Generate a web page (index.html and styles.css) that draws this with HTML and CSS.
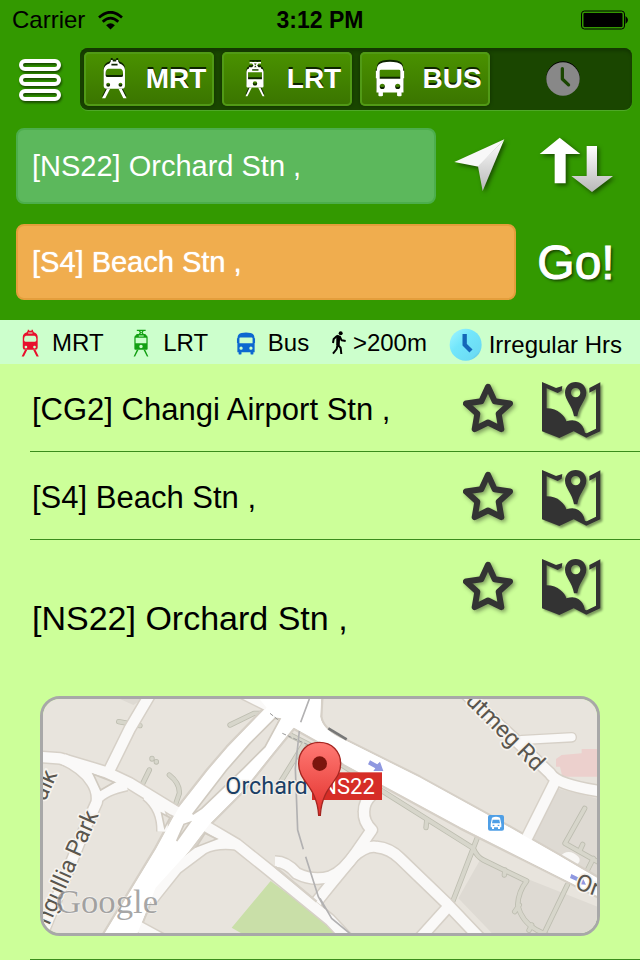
FILE: index.html
```html
<!DOCTYPE html>
<html lang="en">
<head>
<meta charset="utf-8">
<meta name="viewport" content="width=device-width, initial-scale=1">
<title>Stations</title>
<link rel="stylesheet" href="styles.css">
</head>
<body>
<svg class="sprite" aria-hidden="true">
  <symbol id="train" viewBox="0 0 80 124">
    <path fill-rule="evenodd" d="M26 14L30 8V3H36V8H47V3H53V8L57 14Q73 19 74 34V82Q74 92 64 92H18Q8 92 8 82V34Q9 19 26 14ZM32 15V20H51V15ZM22 30Q14 32 14 44V50Q14 56 20 56H62Q68 56 68 50V44Q68 32 60 30ZM22 74A6 6 0 1 0 22 86A6 6 0 1 0 22 74ZM60 74A6 6 0 1 0 60 86A6 6 0 1 0 60 74Z"/>
    <path d="M18 92H28L13 122H3ZM54 92H64L79 122H69Z"/>
  </symbol>
  <symbol id="tram" viewBox="0 0 66 114">
    <path fill-rule="evenodd" d="M16 3H52V8H44L40 14L44 20H52V24Q60 26 60 34V80Q60 84 56 84H10Q6 84 6 80V34Q6 26 14 24V20H24L28 14L24 8H16ZM30 8L34 14L38 8ZM30 20H38L34 15ZM24 26V31H44V26ZM11 36V58H55V36ZM33 64A7 7 0 1 0 33 78A7 7 0 1 0 33 64Z"/>
    <path d="M16 84H23L9 112H3ZM43 84H50L63 112H57Z"/>
  </symbol>
  <symbol id="bus" viewBox="0 0 92 112">
    <path fill-rule="evenodd" d="M24 5Q46 0 68 5Q86 9 87 26V30H90V54H88V98H82V108Q76 112 68 108V98H24V108Q16 112 10 108V98H4V54H2V30H5V26Q6 9 24 5ZM18 27Q14 27 14 31V55H78V31Q78 27 74 27ZM22 71A8 8 0 1 0 22 87A8 8 0 1 0 22 71ZM70 71A8 8 0 1 0 70 87A8 8 0 1 0 70 71Z"/>
  </symbol>
  <symbol id="star" viewBox="60 64 180 170">
    <path fill="none" stroke="#333" stroke-width="18" stroke-linejoin="round" d="M144 81L164 124L210 131L176 162L184 208L144 188L104 208L112 162L78 131L124 124Z"/>
  </symbol>
  <symbol id="mapicon" viewBox="297 56 192 180">
    <path fill="#333" d="M303 62L345 80L364 74L362 88L350 95L317 81V141Q343 141 358 155Q374 168 376 180Q398 172 412 182Q428 192 432 214L437 216L465 202V84L445 94V80L478 63V210L436 229L398 210L355 230L303 210Z"/>
    <path fill="#333" fill-rule="evenodd" d="M404 62C385 62 372 76 372 94C372 116 394 132 399 165H409C414 132 436 116 436 94C436 76 423 62 404 62ZM404 80A14 14 0 1 1 404 108A14 14 0 1 1 404 80Z"/>
  </symbol>
</svg>

<header class="top">
  <div class="status">
    <div class="carrier">Carrier
      <svg class="wifi" viewBox="0 0 74 56" aria-hidden="true">
        <g fill="none" stroke="#000" stroke-width="8"><path d="M3 19Q37 -12 71 19"/><path d="M14 32Q37 10 60 32"/></g>
        <path d="M24 42Q37 31 50 42L37 55Z"/>
      </svg>
    </div>
    <div class="time">3:12 PM</div>
    <svg class="battery" viewBox="0 0 47 20" aria-hidden="true"><rect x="1" y="1" width="43" height="18" rx="3" fill="none" stroke="#000"/><rect x="3" y="3" width="39" height="14" rx="1"/><path d="M45 6Q50 10 45 14Z"/></svg>
  </div>

  <div class="modes">
    <button class="icon-btn menu" aria-label="Menu">
      <svg viewBox="0 0 44 44"><g fill="none" stroke="#fff" stroke-width="4"><rect x="3" y="4" width="38" height="8" rx="4"/><rect x="3" y="19" width="38" height="8" rx="4"/><rect x="3" y="34" width="38" height="8" rx="4"/></g></svg>
    </button>
    <nav class="tabs">
      <button class="tab on"><svg><use href="#train"/></svg>MRT</button>
      <button class="tab on"><svg class="small"><use href="#tram"/></svg>LRT</button>
      <button class="tab on"><svg class="small"><use href="#bus"/></svg>BUS</button>
      <button class="tab off" aria-label="Hours"><svg viewBox="0 0 104 108"><circle cx="52" cy="54" r="51" fill="#888"/><path d="M50 22V54L69 72" fill="none" stroke="#1a4600" stroke-width="10" stroke-linecap="round" stroke-linejoin="round"/></svg></button>
    </nav>
  </div>

  <form class="route">
    <div class="line">
      <input class="field from" type="text" aria-label="From" value="[NS22] Orchard Stn ,">
      <button type="button" class="icon-btn locate" aria-label="Current location">
        <svg viewBox="98 50 168 180"><defs><linearGradient id="lg" x1="0" y1="0" x2="0" y2="1"><stop offset="0" stop-color="#fff"/><stop offset="1" stop-color="#b8b8b8"/></linearGradient></defs><path fill="#f8f8f8" d="M105 128L255 60L178 142Z"/><path fill="url(#lg)" d="M255 60L190 215L176 141Z"/></svg>
      </button>
      <button type="button" class="icon-btn swap" aria-label="Swap">
        <svg viewBox="352 48 234 180"><path fill="#fff" d="M360 102L420 53L482 102H438V190H405V102Z"/><path fill="url(#lg)" d="M501 78H532V168H580L517 216L455 168H501Z"/></svg>
      </button>
    </div>
    <div class="line second">
      <input class="field to" type="text" aria-label="To" value="[S4] Beach Stn ,">
      <button type="button" class="go">Go!</button>
    </div>
  </form>
</header>

<ul class="legend">
  <li class="red"><svg><use href="#train"/></svg>MRT</li>
  <li class="green"><svg><use href="#tram"/></svg>LRT</li>
  <li class="blue"><svg class="low"><use href="#bus"/></svg>Bus</li>
  <li><svg class="walk" viewBox="26 42 46 72"><circle cx="54" cy="49" r="6"/><path d="M43 56L52 60L57 70L69 72M43 57L33 66L31 78M47 58L45 82L54 93L56 111M45 82L42 96L31 110" fill="none" stroke="#000" stroke-width="6" stroke-linejoin="round"/><path d="M41 55L53 58L51 84H41Z"/></svg>&gt;200m</li>
  <li class="hours"><svg class="clock" viewBox="0 0 102 102"><defs><linearGradient id="cg" x1="0" y1="0" x2="1" y2="1"><stop offset="0" stop-color="#a4f6ff"/><stop offset="0.4" stop-color="#72e6fb"/><stop offset="0.8" stop-color="#6cdcf4"/><stop offset="1" stop-color="#4aa8cc"/></linearGradient></defs><circle cx="50" cy="50" r="48" fill="url(#cg)"/><path d="M47 18V50L66 69" fill="none" stroke="#1467b8" stroke-width="13"/></svg>Irregular Hrs</li>
</ul>

<main class="stations">
  <article class="station">
    <h2>[CG2] Changi Airport Stn ,</h2>
    <div class="actions"><button class="icon-btn" aria-label="Favourite"><svg class="star"><use href="#star"/></svg></button><button class="icon-btn" aria-label="Map"><svg class="map-ic"><use href="#mapicon"/></svg></button></div>
  </article>
  <article class="station">
    <h2>[S4] Beach Stn ,</h2>
    <div class="actions"><button class="icon-btn" aria-label="Favourite"><svg class="star"><use href="#star"/></svg></button><button class="icon-btn" aria-label="Map"><svg class="map-ic"><use href="#mapicon"/></svg></button></div>
  </article>
  <article class="station open">
    <div class="head">
      <h2>[NS22] Orchard Stn ,</h2>
      <div class="actions"><button class="icon-btn" aria-label="Favourite"><svg class="star"><use href="#star"/></svg></button><button class="icon-btn" aria-label="Map"><svg class="map-ic"><use href="#mapicon"/></svg></button></div>
    </div>
    <div class="map">
      <svg viewBox="39 42 1662 702" preserveAspectRatio="xMidYMid slice">
        <defs>
          <linearGradient id="pin" x1="0" y1="0" x2="0" y2="1"><stop offset="0" stop-color="#ff7a74"/><stop offset="1" stop-color="#e2302c"/></linearGradient>
          <g id="minor">
            <path d="M20 215L90 220L230 262L300 295L430 375L530 425L620 478L720 558L900 705L980 790"/>
            <path d="M365 20L300 130L235 262"/>
            <path d="M100 222Q160 250 185 290Q205 320 200 352L165 430L60 690L20 790M198 345Q220 315 290 300"/>
            <path d="M350 330Q400 370 398 440"/>
            <path d="M620 478Q560 470 520 490L440 550L360 650"/>
            <path d="M320 722L400 765"/>
            <path d="M640 25L740 75"/>
            <path d="M735 530Q770 530 800 565Q850 590 900 575Q940 560 980 500L1025 435Q1000 410 1002 380Q1002 350 1025 330"/>
            <path d="M860 650L900 600L970 515Q1010 480 1040 486Q1080 490 1110 520L1250 655L1350 760"/>
            <path d="M1255 665L1165 765"/>
            <path d="M1300 20L1440 150L1560 265Q1580 300 1720 320"/>
            <path d="M1575 290L1485 470"/>
          </g>
          <g id="paths">
            <path d="M920 230L1060 320L1330 490Q1340 515 1360 525L1490 588Q1465 620 1463 660Q1475 710 1520 735L1580 765M1345 450L1268 650M1612 600L1535 760M1190 408L1188 428M1425 555L1423 570M1468 660L1454 680M1505 720L1497 736M1664 370L1605 475L1720 540M1658 478L1648 500M1690 520L1670 560"/>
            <path d="M820 180L752 290M780 150L880 200M600 120L672 85L700 85M266 110L330 122M358 255L336 300M418 270Q450 295 448 325L436 360M366 220L366 222M379 230L379 231"/>
          </g>
        </defs>
        <rect x="30" y="33" width="1680" height="720" fill="#e8e4dd"/>
        <path fill="#dedad3" d="M1350 525L1740 680V780H1420L1285 640ZM1580 310L1720 345V590L1500 470ZM270 42H340L310 60Z"/>
        <path fill="#c9dfa8" d="M722 588L605 728L660 760H1000L900 720Z"/>
        <path fill="#ecd0cd" d="M1578 222L1595 210L1655 205V192H1720V275H1597L1590 245H1578Z"/>
        <use href="#paths" fill="none" stroke="#bdbdb0" stroke-width="16" stroke-linecap="round" stroke-linejoin="round"/>
        <use href="#paths" fill="none" stroke="#d7d6cb" stroke-width="11" stroke-linecap="round" stroke-linejoin="round"/>
        <use href="#minor" fill="none" stroke="#d6d0c7" stroke-width="40" stroke-linejoin="round"/>
        <path d="M1475 165L1625 157" stroke="#d6d0c7" stroke-width="32" stroke-linecap="round"/>
        <path d="M1600 525Q1615 505 1635 525" fill="none" stroke="#f8f7f5" stroke-width="28" stroke-linecap="round"/>
        <path fill="#fff" stroke="#d6d0c7" stroke-width="7" stroke-linejoin="round" d="M655 20L706 65L590 185L530 255L440 370L375 490L205 770H315L380 610L480 500L545 415L640 320L720 220L792 132L860 170L940 240L1060 305L1290 430L1480 525L1720 645V585L1590 510L1370 385L1170 275L950 165Q880 135 874 95L878 20Z"/>
        <use href="#minor" fill="none" stroke="#faf9f8" stroke-width="31" stroke-linejoin="round"/>
        <path fill="#fff" d="M710 68L594 187L534 257L444 372L379 492L210 770H312L377 608L477 498L542 413L637 318L717 218L790 126L862 166L942 236L1062 301L1292 426L1480 521L1700 632V580L1588 512L1368 387L1168 277L948 167Q876 136 870 95L874 20H670Z"/>
        <path d="M1475 165L1625 157" stroke="#faf9f8" stroke-width="24" stroke-linecap="round"/>
        <path fill="#e8e4dd" stroke="#d0cac0" stroke-width="5" d="M735 100L750 102L705 185L640 250L515 370L488 388L590 255L660 175ZM480 412L440 468L462 418ZM190 268L252 292L212 315ZM395 385L420 398L404 428ZM525 445L560 462L500 485Z"/>
        <path d="M720 85L745 105M757 145L880 200" stroke="#999" stroke-width="3" stroke-dasharray="12 6"/>
        <path fill="none" stroke="#b2b1b2" stroke-width="5" d="M838 42L812 112M808 138L796 250L803 435L820 493M827 515L865 635L885 670M870 640L905 700L965 750"/>
        <path d="M735 545L860 650" stroke="#d6d0c7" stroke-width="7"/>
        <path d="M895 130L950 163" stroke="#777" stroke-width="8"/>
        <g fill="#8f98e0"><path d="M1020 226L1042 238L1050 230L1060 258L1030 258L1036 250L1014 238Z"/><path d="M1624 567L1650 580L1656 574L1668 599L1640 597L1645 590L1620 579Z"/></g>
        <g class="road-name">
          <text transform="translate(58 722) rotate(-66)">ngullia Park</text>
          <text transform="translate(46 350) rotate(-66)">alk</text>
          <text transform="translate(1304 50) rotate(45)">utmeg Rd</text>
          <text transform="translate(1632 610) rotate(20)">Or</text>
        </g>
        <text class="google" x="78" y="683">Google</text>
        <text class="place" x="586" y="326">Orchard</text>
        <rect x="846" y="262" width="210" height="83" fill="#d62d27"/>
        <text class="code" x="874" y="326">NS22</text>
        <g transform="translate(1374 390)"><rect width="48" height="47" rx="6" fill="#4f9fe6"/><path fill="#fff" fill-rule="evenodd" d="M12 8Q24 3 36 8L40 28V37H36V42H30V37H18V42H12V37H8V28ZM14 14L12 25H36L34 14ZM14 29V33H19V29ZM29 29V33H34V29Z"/></g>
        <path fill="url(#pin)" stroke="#a52621" stroke-width="4" d="M868 172C830 172 806 200 806 236C806 292 860 300 866 391H871C876 300 932 292 932 236C932 200 906 172 868 172Z"/>
        <circle cx="869" cy="236" r="22" fill="#7c150d"/>
      </svg>
    </div>
  </article>
</main>
</body>
</html>
```
FILE: styles.css
```css
* { box-sizing: border-box; }
body {
  margin: 0;
  background: #ccff99;
  color: #000;
  font-family: "Liberation Sans", Arial, sans-serif;
}
button { font-family: inherit; border: 0; padding: 0; background: none; cursor: pointer; }
svg { display: block; flex: none; }
.sprite { position: absolute; width: 0; height: 0; }

.top { background: #339900; padding-bottom: 20px; }

.status {
  display: grid;
  grid-template-columns: 1fr auto 1fr;
  align-items: center;
  height: 40px;
  padding: 0 12px;
  font-size: 24px;
}
.carrier { display: flex; align-items: center; gap: 13px; }
.wifi { width: 25px; height: 19px; }
.time { font-weight: bold; font-size: 23px; }
.battery { justify-self: end; width: 48px; height: 20px; }

.modes { display: flex; align-items: center; gap: 16px; padding: 8px 8px 18px 16px; }
.icon-btn { display: flex; align-items: center; justify-content: center; }
.menu { width: 48px; }
.menu svg { width: 44px; height: 44px; filter: drop-shadow(1px 2px 1px rgba(0, 0, 0, .5)); }

.tabs {
  flex: 1;
  display: grid;
  grid-template-columns: repeat(4, 1fr);
  gap: 8px;
  height: 62px;
  padding: 4px;
  border-radius: 8px;
  background: #1a4600;
  box-shadow: inset 0 3px 3px #143800, 0 1px 0 #4fa828;
}
.tab {
  display: flex;
  align-items: center;
  justify-content: center;
  gap: 16px;
  border-radius: 5px;
  color: #fff;
  fill: #fff;
  font-size: 28px;
  font-weight: bold;
}
.tab svg { width: 32px; height: 40px; filter: drop-shadow(0 -2px 0 #0d2400); }
.tab .small { height: 36px; }
.tab.on {
  padding-left: 6px;
  background: linear-gradient(#4a9200, #3a7400);
  box-shadow: inset 0 0 0 2px #519a16, 0 0 3px 1px #143800;
  text-shadow: 0 -2px 0 #0d2400;
}
.tab.off svg { width: 34px; height: 36px; filter: drop-shadow(0 -1px 0 #000); }

.route { display: flex; flex-direction: column; gap: 20px; padding: 0 12px 0 16px; }
.line { display: flex; gap: 12px; }
.line.second { gap: 8px; }
.field {
  flex: 1;
  min-width: 0;
  height: 76px;
  padding: 0 14px;
  border: 2px solid;
  border-radius: 8px;
  color: #fff;
  font-family: inherit;
  font-size: 29px;
}
.from { background: #5cb85c; border-color: #4cae4c; }
.to { background: #f0ad4e; border-color: #e49e3c; text-shadow: 0 0 1px #fff; }
.locate { width: 64px; }
.swap, .go { width: 104px; }
.locate svg { width: 56px; height: 60px; }
.swap svg { width: 78px; height: 60px; }
.locate svg, .swap svg { filter: drop-shadow(2px 2px 2px rgba(0, 0, 0, .5)); }
.go {
  color: #fff;
  font-size: 48px;
  -webkit-text-stroke: 1px #fff;
  text-shadow: 2px 2px 3px rgba(0, 0, 0, .6);
}

.legend {
  display: flex;
  align-items: center;
  justify-content: space-between;
  height: 44px;
  margin: 0;
  padding: 2px 18px 0 14px;
  background: #ccffcc;
  list-style: none;
  font-size: 24px;
}
.legend li { display: flex; align-items: center; gap: 6px; white-space: nowrap; }
.legend svg { width: 32px; height: 28px; }
.legend .low { height: 23px; }
.legend .walk { width: 16px; height: 24px; }
.legend .clock { width: 34px; height: 34px; }
.legend .hours { padding-top: 4px; }
.red { fill: #e8102c; }
.green { fill: #12a012; }
.blue { fill: #0c68d0; }

.station {
  display: flex;
  align-items: center;
  justify-content: space-between;
  min-height: 88px;
  margin-left: 30px;
  padding: 4px 36px 0 2px;
  border-bottom: 1px solid #3a8c1c;
}
.station h2 { margin: 0; font-size: 31px; font-weight: normal; }
.actions { display: flex; align-items: center; gap: 20px; }
.star { width: 60px; height: 57px; filter: drop-shadow(2px 2px 2px rgba(0, 0, 0, .4)); }
.map-ic { width: 64px; height: 60px; filter: drop-shadow(2px 2px 1px rgba(0, 0, 0, .4)); }

.station.open { display: block; padding: 0 0 23px; }
.head {
  display: flex;
  align-items: center;
  justify-content: space-between;
  height: 156px;
  padding: 0 36px 0 2px;
}
.station.open h2 { font-size: 34px; }
.head .actions { align-self: flex-start; padding-top: 17px; }
.map {
  height: 240px;
  margin: 0 40px 0 10px;
  overflow: hidden;
  border: 3px solid #a8a8a8;
  border-radius: 20px;
}
.map svg { width: 100%; height: 100%; }
.road-name, .place, .code { font-family: Roboto, sans-serif; }
.road-name {
  fill: #5a564e;
  font-size: 70px;
  stroke: #f6f3ee;
  stroke-width: 10px;
  stroke-linejoin: round;
  paint-order: stroke;
}
.place { fill: #1b3f66; font-size: 70px; stroke: #f2efe9; stroke-width: 8px; paint-order: stroke; }
.code { fill: #fff; font-size: 66px; }
.google { fill: #8a8a8a; fill-opacity: .75; font-family: "Liberation Serif", serif; font-size: 104px; stroke: #fff; stroke-opacity: .5; stroke-width: 4px; paint-order: stroke; }
```
